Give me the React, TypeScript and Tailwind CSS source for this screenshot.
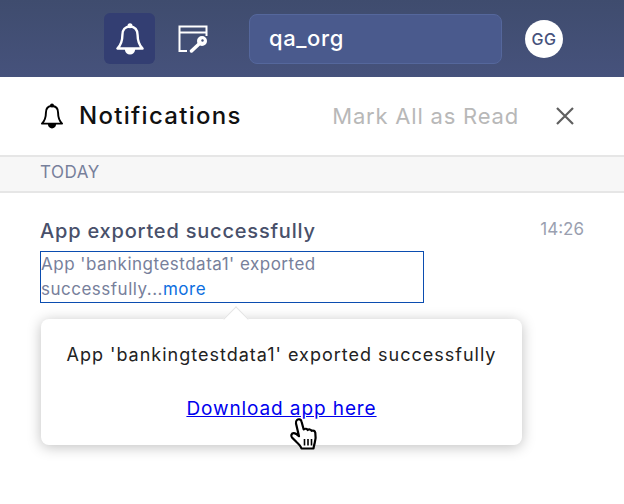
const font = { fontFamily: "Inter, 'Open Sans', sans-serif" };

function BellIcon({ className, stroke = "currentColor" }: { className?: string; stroke?: string }) {
  return (
    <svg viewBox="0 0 30 32" className={className} fill="none" stroke={stroke} strokeWidth="2.4" strokeLinejoin="round" strokeLinecap="round">
      <path d="M15 3.500c-5 0-7.600 3.600-7.600 8.400 0 6-1.400 10-5 13.600h25.200c-3.600-3.600-5-7.600-5-13.600 0-4.800-2.600-8.400-7.600-8.400z" />
      <circle cx="15" cy="2.800" r="1.300" fill={stroke} />
      <path d="M11 26.500c0.500 2.600 2 3.800 4 3.800s3.500-1.200 4-3.800z" fill={stroke} />
    </svg>
  );
}

function KeyWindowIcon() {
  return (
    <svg viewBox="0 0 30 28" className="h-[28px] w-[30px]" fill="none" stroke="white" strokeWidth="2">
      <path d="M9 26H1.500V1.500h27V11" />
      <path d="M1.500 7.500h27" />
      <circle cx="24" cy="16" r="4" fill="white" />
      <path d="M21 19l-7.500 7" strokeWidth="3.500" strokeLinecap="round" />
      <circle cx="24.500" cy="15.500" r="1.200" fill="#44527a" stroke="none" />
    </svg>
  );
}

function HandCursor() {
  return (
    <svg viewBox="0 0 32 36" className="absolute left-[289px] top-[417px] h-[36px] w-[32px]">
      <path
        d="M8 3c1.800-1.500 4-.6 4.500 1.500l2.200 8c1.500-1.200 3.300-.9 4 .5 1.300-1 3.200-.7 3.900.8 1.600-.7 3.300 .2 3.700 1.900.6 3.200.3 7-.6 10.300-.6 2.200-1 3.600-1.200 5.500H12.500c-.8-2.600-2.600-4.300-5-6.500L3 20.500c-1.500-1.700-.5-4.200 1.700-4.300 1.700-.1 3.300 1.100 5.300 3L7 6.500C6.700 5.200 7.100 3.800 8 3z"
        fill="white"
        stroke="black"
        strokeWidth="2.200"
        strokeLinejoin="round"
      />
      <path d="M15.500 22v6.500M19 22v6.500M22.500 22v6.500" stroke="black" strokeWidth="1.600" />
    </svg>
  );
}

export default function App() {
  return (
    <div style={font} className="relative flex h-[504px] w-[624px] flex-col overflow-hidden bg-white">
      <div className="flex h-[77px] shrink-0 items-center bg-gradient-to-b from-[#3f4c6e] to-[#46527c] pl-[104px]">
        <div className="flex h-[51px] w-[51px] items-center justify-center rounded-[6px] bg-[#333e72]">
          <BellIcon className="h-[32px] w-[30px]" stroke="white" />
        </div>
        <div className="ml-[23px] flex h-[51px] w-[30px] items-center">
          <KeyWindowIcon />
        </div>
        <div className="ml-[41px] flex h-[50px] w-[253px] items-center rounded-[8px] border border-[#55679c] bg-[#4a5a8d] pl-[19px] text-[22px] font-medium tracking-[0.6px] text-white">
          qa_org
        </div>
        <div className="ml-[23px] flex h-[38px] w-[38px] items-center justify-center rounded-full bg-white text-[16px] font-medium tracking-[0.5px] text-[#46527c]">
          GG
        </div>
      </div>

      <div className="flex h-[78px] shrink-0 items-center pl-[40px] pr-[49px]">
        <BellIcon className="h-[26px] w-[24px]" stroke="black" />
        <span className="ml-[15px] text-[24px] font-medium tracking-[1.3px] text-[#111111]">Notifications</span>
        <span className="ml-auto text-[22px] font-normal tracking-[0.8px] text-[#b8b8b8]">Mark All as Read</span>
        <svg viewBox="0 0 20 20" className="ml-[36px] h-[20px] w-[20px]" stroke="#5f5f5f" strokeWidth="2.200">
          <path d="M2 2l16 16M18 2L2 18" />
        </svg>
      </div>

      <div className="flex h-[38px] shrink-0 items-center border-y-2 border-[#e6e6e6] bg-[#f7f7f7] pb-[2px] pl-[40px] text-[17px] font-normal tracking-[0.5px] text-[#77809b]">
        TODAY
      </div>

      <div className="flex justify-between px-[40px] pt-[25px]">
        <div className="w-[384px]">
          <div className="h-[26px] text-[20px] font-medium leading-[26px] tracking-[0.8px] text-[#48506a]">App exported successfully</div>
          <div className="mt-[7px] h-[52px] border border-[#0b4db0] text-[17px] leading-[25px] tracking-[0.5px] text-[#77809b]">
            App 'bankingtestdata1' exported successfully...<span className="text-[#0e6fe0]">more</span>
          </div>
        </div>
        <span className="-mt-[1px] text-[17px] text-[#9a9fb0]">14:26</span>
      </div>

      <div className="absolute left-[41px] top-[319px] flex h-[126px] w-[481px] flex-col items-center rounded-[8px] bg-white pt-[23px] text-[#222222] shadow-[0_2px_14px_rgba(0,0,0,0.25)]">
        <div className="absolute left-[186px] top-[-9px] h-[18px] w-[18px] rotate-45 border-l border-t border-[#e4e4e4] bg-white" />
        <div className="relative text-[18px] leading-[26px] tracking-[1px]">App 'bankingtestdata1' exported successfully</div>
        <a href="#" className="relative mt-[28px] text-[19px] leading-[26px] tracking-[0.9px] text-[#0000ee] underline">
          Download app here
        </a>
      </div>

      <HandCursor />
    </div>
  );
}
